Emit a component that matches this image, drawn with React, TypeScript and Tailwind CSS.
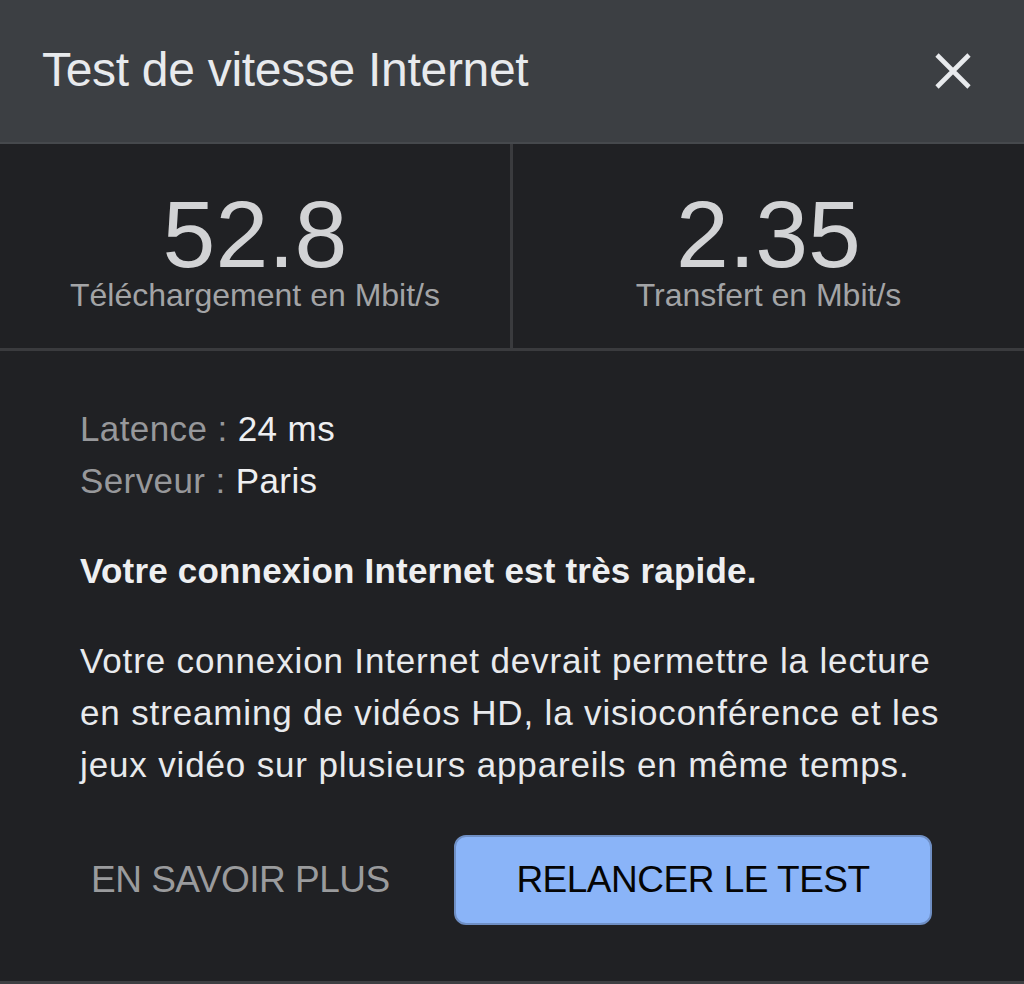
const font = { fontFamily: '"Liberation Sans", Arial, sans-serif' };

function CloseIcon() {
  return (
    <svg width="36" height="36" viewBox="0 0 36 36" className="text-[#e8eaed]">
      <path d="M2 2L34 34M34 2L2 34" stroke="currentColor" strokeWidth="4.6" />
    </svg>
  );
}

function Stat({ value, label, divider }: { value: string; label: string; divider?: boolean }) {
  return (
    <div
      className={`flex flex-col items-center justify-center pt-[7px] ${
        divider ? "border-r-[3px] border-[#3a3b3e]" : ""
      }`}
    >
      <div className="text-[95px] leading-[90px] text-[#d2d3d5]">{value}</div>
      <div className="text-[32px] leading-[32px] text-[#a3a4a6]">{label}</div>
    </div>
  );
}

export default function App() {
  return (
    <div className="w-[1024px] h-[984px] bg-[#202124] flex flex-col overflow-hidden" style={font}>
      {/* Header */}
      <div className="h-[144px] shrink-0 bg-[#3c3f43] border-b-[2px] border-[#46494d] flex items-center justify-between pl-[42px] pr-[53px]">
        <h1 className="text-[48px] font-normal text-[#e8eaed] tracking-[-0.3px] pb-[2px]">
          Test de vitesse Internet
        </h1>
        <CloseIcon />
      </div>

      {/* Stats */}
      <div className="grid grid-cols-[513px_1fr] h-[207px] shrink-0 border-b-[3px] border-[#3a3b3e]">
        <Stat value="52.8" label="Téléchargement en Mbit/s" divider />
        <Stat value="2.35" label="Transfert en Mbit/s" />
      </div>

      {/* Details */}
      <div className="flex-1 flex flex-col pl-[80px] pr-[60px] pt-[52px]">
        <div className="text-[35px] leading-[52px] tracking-[0.4px]">
          <div>
            <span className="text-[#97989b]">Latence : </span>
            <span className="text-[#eeeff1]">24 ms</span>
          </div>
          <div>
            <span className="text-[#97989b]">Serveur : </span>
            <span className="text-[#eeeff1]">Paris</span>
          </div>
        </div>

        <p className="mt-[38px] text-[35px] leading-[52px] font-bold tracking-[0.2px] text-[#eeeff1]">
          Votre connexion Internet est très rapide.
        </p>

        <p className="mt-[38px] text-[35px] leading-[52px] tracking-[0.85px] text-[#e8eaed] max-w-[880px]">
          Votre connexion Internet devrait permettre la lecture en streaming de vidéos HD, la
          visioconférence et les jeux vidéo sur plusieurs appareils en même temps.
        </p>

        <div className="mt-[44px] flex items-center">
          <button className="w-[374px] text-left pl-[11px] text-[37px] text-[#9a9b9d] tracking-[-0.5px]">
            EN SAVOIR PLUS
          </button>
          <button className="w-[478px] h-[90px] rounded-[12px] bg-[#8ab4f8] border-[2px] border-[#6f8fc4] text-[37px] text-[#050505] tracking-[-0.5px]">
            RELANCER LE TEST
          </button>
        </div>
      </div>

      <div className="h-[3px] shrink-0 bg-[#3e3f42]" />
    </div>
  );
}
